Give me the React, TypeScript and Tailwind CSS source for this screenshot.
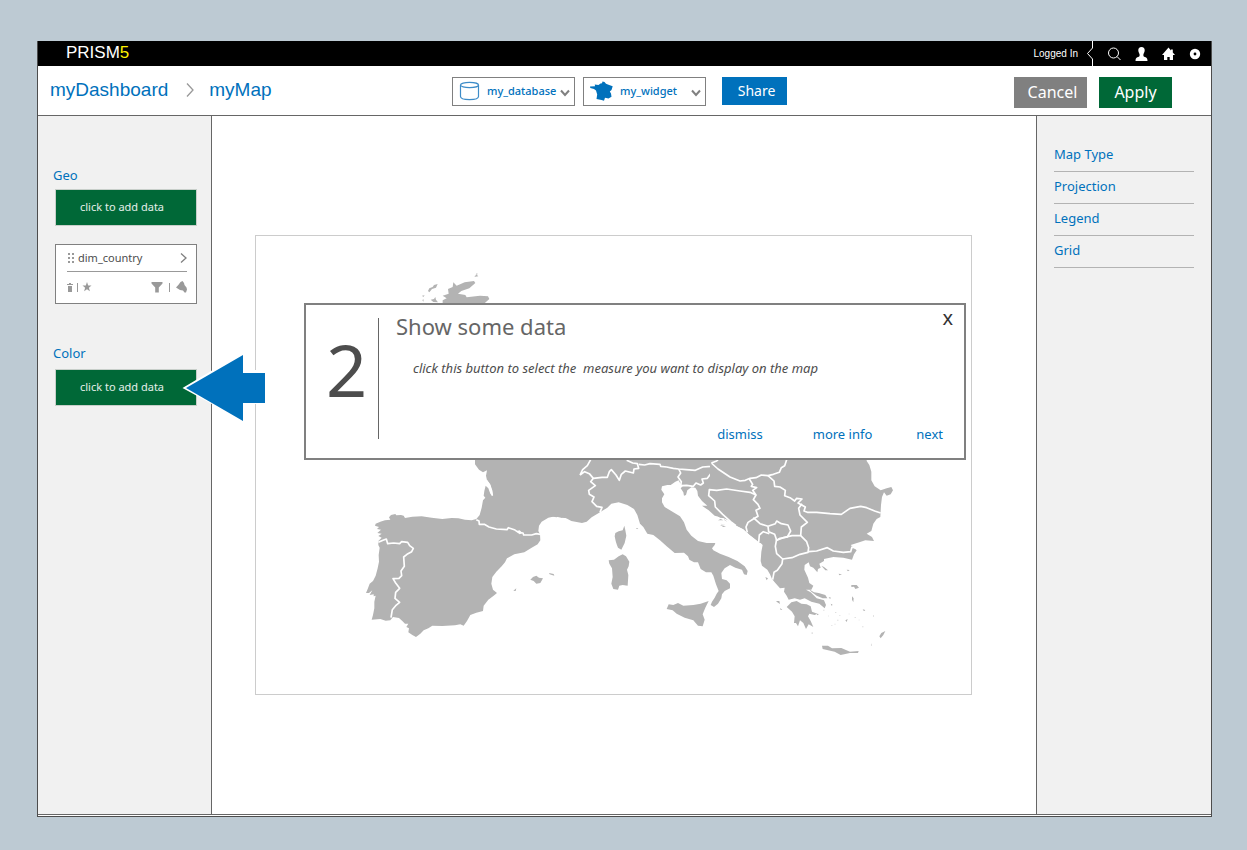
import React from "react";

const humanist = "font-['Noto_Sans','Open_Sans',sans-serif]";

function EuropeMap() {
  return (
    <svg
      viewBox="256 236 715 458"
      role="img"
      aria-label="Map of southern Europe"
      className="block h-auto w-full"
      fill="#b3b3b3"
    >
      <g transform="translate(300 265) scale(0.33333)">
        <path d="M428 130L428 106L440 100L428 92L446 86L444 72L458 66L460 52L470 62L494 52L522 48L526 54L508 70L484 78L474 86L496 90L500 97L540 92L564 94L568 102L552 116L550 130Z" />
        <path d="M384 78L388 70L398 66L402 60L413 57L408 68L396 72L388 82Z M392 104L402 102L406 96L408 104L414 112L400 111Z M366 92L374 91L370 96Z M367 106L370 102L371 110Z M523 34L530 29L535 34L526 35Z M527 29L531 24L533 28Z" />
      </g>
      <g transform="translate(355 455) scale(0.33333)">
        <path d="M360 10L360 28L372 44L384 52L396 46L393 62L396 76L405 88L411 108L413 124L406 116L400 100L392 92L388 108L386 122L391 128L384 136L380 158L374 180L364 192L350 196L330 194L310 190L290 189L262 192L230 188L200 184L172 185L150 189L146 182L138 180L124 181L121 177L108 180L102 187L106 194L90 196L76 200L62 206L60 212L72 216L66 222L78 224L67 234L80 236L70 243L80 248L70 258L70 270L74 278L71 300L72 320L68 340L62 362L54 378L44 386L38 402L33 414L42 414L52 406L44 420L56 418L56 424L62 422L58 440L58 460L54 480L50 494L76 492L92 497L106 496L114 486L132 489L142 498L150 506L160 506L154 516L162 520L160 532L172 540L183 546L196 536L206 526L220 520L232 512L262 513L300 511L316 508L326 512L336 498L346 480L364 473L384 468L386 452L400 434L416 422L426 414L414 404L409 386L412 366L424 350L440 334L450 322L456 310L478 298L508 292L530 278L548 268L556 256L555 238L550 228L552 212L560 200L580 188L600 184L618 188L640 190L640 10Z" />
        <path d="M526 374L534 366L544 362L552 368L564 370L556 384L544 386L536 378Z M582 354L596 357L598 362L584 358Z M475 407L484 400L482 408Z" />
        <g fill="none" stroke="#fff" strokeWidth="5" strokeLinejoin="round">
          <path d="M364 194L372 198L373 208L388 208L402 216L424 222L456 224L460 218L478 224L490 232L504 234L506 240L530 240L544 236L556 238" />
          <path d="M70 262L84 256L94 252L98 266L116 264L134 266L140 260L158 262L164 272L175 280L170 290L156 298L146 306L148 334L138 348L140 362L132 370L114 371L122 384L134 400L122 412L120 430L134 442L122 452L112 464L108 488" />
          <path d="M394 76L404 90L410 108L412 122" />
        </g>
        <path d="M484 228L494 226L502 234L494 238Z" fill="#fff" />
      </g>
      <g transform="translate(550 455) scale(0.33333)">
        <path d="M-30 10L-30 188L0 184L20 187L32 182L34 188L44 182L46 188L64 198L96 204L110 200L125 187L150 172L172 158L184 146L206 142L232 150L252 162L262 180L270 206L280 216L292 236L310 240L330 256L350 274L374 294L402 293L414 304L418 314L432 322L444 322L452 342L468 352L484 352L490 362L498 388L506 408L500 416L494 428L486 440L482 450L492 456L504 446L514 430L516 418L524 408L540 400L540 386L530 376L516 372L514 354L524 340L540 330L556 338L576 344L582 358L590 360L593 348L584 334L562 318L536 306L510 296L490 286L486 280L494 270L496 264L470 264L444 258L424 242L410 224L402 202L390 184L370 172L344 156L336 142L336 130L343 118L334 104L336 94L352 90L362 90L376 80L386 76L392 88L398 94L392 100L400 112L402 122L408 120L412 106L424 97L436 98L442 108L444 122L456 138L472 152L456 152L476 166L494 182L518 188L540 198L556 210L580 222L600 240L630 264L640 264L640 10Z" />
        <path d="M223 212L226 226L229 242L224 264L214 284L204 278L200 268L197 258L194 244L196 234L206 229L218 226Z" />
        <path d="M176 316L192 314L206 304L218 298L228 304L238 320L236 334L231 344L235 360L233 392L218 390L208 392L204 404L190 402L184 386L188 366L186 340L178 326Z" />
        <path d="M350 462L356 448L370 450L384 444L400 452L430 450L452 446L476 438L466 458L458 478L464 494L458 514L444 512L430 496L404 488L380 476L368 466Z" />
        <path d="M258 219L265 220L261 223Z M504 196L512 192L520 196M510 210L528 214L520 216Z" />
        <g fill="none" stroke="#fff" strokeWidth="5" strokeLinejoin="round">
          <path d="M90 60L98 44L112 32L122 14M90 60L104 50L118 56L130 70L122 80L136 92L116 106L118 118L132 126L126 140L140 154L156 157L150 172" />
          <path d="M130 70L156 67L172 67L178 50L184 44L198 60L208 76L214 58L226 48L250 54L252 42L266 40L262 26L248 24L230 16" />
          <path d="M266 28L284 30L300 26L330 28L332 34L350 36L370 40L386 42L408 44L436 46L458 36L484 34L500 16" />
          <path d="M386 42L392 54L384 66L394 80L392 92L410 91L430 94L438 84L452 90L460 84L456 72L472 70L484 54L502 44" />
          <path d="M412 108L422 118L432 132M420 106L440 128" strokeWidth="2" />
        </g>
      </g>
      <g transform="translate(700 455) scale(0.33333)">
        <path d="M30 10L30 166L60 188L80 190L106 210L130 222L150 240L178 260L188 270L184 290L182 318L186 332L202 344L210 358L216 372L226 384L240 400L254 398L252 410L260 422L266 434L284 430L300 434L314 430L334 440L358 446L374 460L378 450L372 436L350 430L332 412L318 404L334 404L340 392L328 384L324 368L313 344L314 330L326 322L330 334L340 338L352 352L354 342L362 338L358 326L372 318L372 312L400 306L430 308L456 314L462 298L470 286L452 270L478 262L496 256L522 258L516 246L500 236L514 228L520 206L530 192L541 186L543 150L546 126L552 112L560 122L572 118L579 106L574 96L560 100L542 106L524 94L514 76L514 50L508 30L500 18L500 10Z" />
        <path d="M260 456L274 442L290 438L304 446L320 448L332 454L336 470L352 476L344 480L328 476L324 484L332 498L340 516L326 508L318 522L310 504L300 496L294 514L288 504L282 504L284 484L276 470Z" />
        <path d="M326 402L342 412L356 414L376 420L382 430L368 430L350 422L334 410Z M366 572L384 572L396 580L424 579L450 590L476 588L474 594L450 594L422 600L404 590L368 582Z M538 544L544 534L556 528L550 540L542 550Z" />
        <path d="M454 390L470 390L477 398L466 402L462 395L454 396Z M456 424L461 430L460 442L456 434Z M416 356L426 358L418 361Z M440 344L449 345L444 349Z M488 463L496 465L492 469Z M436 496L443 492L440 501Z M228 438L238 438L240 447L232 442Z M240 459L247 464L242 465Z M196 366L204 370L200 376Z M350 476L357 477L352 481Z M364 332L372 336L384 346L376 346Z M392 446L397 448L396 454Z M386 426L393 428L390 432Z" />
        <path d="M370 464h3v3h-3z M384 482h3v2h-3z M405 472h4v2h-4z M412 494h3v3h-3z M394 510h3v2h-3z M446 476h3v2h-3z M464 486h3v3h-3z M476 494h3v2h-3z M487 514h3v3h-3z M513 566h2v7h-2z M335 532h3v5h-3z M520 480h2v6h-2z M404 506h2v3h-2z M418 480h3v2h-3z" opacity=".55" />
        <path d="M62 206L76 210L64 208Z M72 192L82 200L74 196Z" />
        <g fill="none" stroke="#fff" strokeWidth="5" strokeLinejoin="round">
          <path d="M34 24L54 42L90 66L120 78L136 76L150 70L168 68L184 60L204 62L220 58L238 52L244 38L254 32L260 14M34 24L50 18L54 14" />
          <path d="M148 72L158 88L154 94L170 98L158 106L168 120L150 112L120 108L80 102L50 106L28 104L26 122L44 138L46 156L68 178L92 200L108 212" />
          <path d="M168 120L160 134L174 148L180 160L168 166L174 184L160 192L144 202L138 216L142 232" />
          <path d="M204 62L222 78L224 94L240 96L256 106L254 122L270 128L284 138L290 130L306 132L294 144L316 156L312 168L322 172L350 172L390 176L424 178L450 160L482 154L500 158L524 168L542 174" />
          <path d="M306 146L296 160L300 180L322 202L304 216L302 242" />
          <path d="M160 188L180 206L204 214L226 206L230 198L244 206L264 210L272 228L262 246L240 250L230 256L224 238L206 230L204 214" />
          <path d="M176 262L178 240L190 230L208 236M230 252L226 274L230 296L248 312L246 326L232 346L222 352L218 374" />
          <path d="M230 256L250 248L276 242L302 242L320 260L326 278L324 292L300 298L276 308L248 312M326 290L350 288L382 278L400 288L430 292L452 290L456 276L474 282" />
        </g>
      </g>
    </svg>
  );
}

function Chevron() {
  return (
    <svg viewBox="0 0 10 8" className="pointer-events-none absolute right-1 bottom-2 h-2 w-2.5" fill="none" stroke="#808080" strokeWidth="2">
      <path d="M1 1.5L5 6L9 1.5" />
    </svg>
  );
}

function Picker({ label, value, children, pad }: { label: string; value: string; children: React.ReactNode; pad: string }) {
  return (
    <label className="relative flex h-[29px] w-[123px] items-center border border-[#808080] bg-white">
      <span className="pointer-events-none absolute left-1.5 top-0.5">{children}</span>
      <select aria-label={label} className={`h-full w-full appearance-none bg-transparent text-[11px] font-medium text-[#0071bc] outline-none ${pad}`}>
        <option>{value}</option>
      </select>
      <Chevron />
    </label>
  );
}

function AddData() {
  return (
    <button className="block h-[37px] w-full border border-[#c8cfca] bg-[#006837] pr-2 pb-px text-center text-[11px] text-[#e4efe9]">
      click to add data
    </button>
  );
}

function TopBar() {
  return (
    <header className="flex h-[25px] items-center bg-black pl-7 pr-2.5 text-white">
      <div className="grow pb-0.5 font-['Liberation_Sans',sans-serif] text-[17px] leading-5">
        PRISM<span className="text-[#fff200]">5</span>
      </div>
      <span className="font-['Liberation_Sans',sans-serif] text-[10px]">Logged In</span>
      <svg viewBox="0 0 8 25" className="ml-2 h-[25px] w-2" fill="none" stroke="#fff">
        <path d="M6.5 0V7L1.5 12.500L6.500 18V25" />
      </svg>
      <nav className="ml-[13px] flex items-center gap-3.5">
        <button aria-label="Search">
          <svg viewBox="0 0 14 14" className="size-3.5" fill="none" stroke="#fff">
            <circle cx="6.500" cy="6" r="5" />
            <path d="M10 9.500L13.500 13" />
          </svg>
        </button>
        <button aria-label="Account">
          <svg viewBox="0 0 13 14" className="h-3.5 w-[13px]" fill="#fff">
            <path d="M6.500 0C4.300 0 3.200 1.500 3.300 3.500C3.400 5.500 4.500 6.300 4.600 7.500C4.700 9 4.500 9.600 3 10.100C1.300 10.700 .5 11.300 .5 14H12.500C12.500 11.300 11.700 10.700 10 10.100C8.500 9.600 8.300 9 8.400 7.500C8.500 6.300 9.600 5.500 9.700 3.500C9.800 1.500 8.700 0 6.500 0Z" />
          </svg>
        </button>
        <a href="#home" aria-label="Home">
          <svg viewBox="0 0 13 13" className="size-[13px]" fill="#fff">
            <path d="M6.500 .5L0 8H2V13H5.300V10H7.700V13H11V8H13L10.800 5.500V2.500H9V3.500Z" />
          </svg>
        </a>
        <button aria-label="Settings">
          <svg viewBox="0 0 12 12" className="size-3" fill="#fff">
            <circle cx="6" cy="6" r="5.200" />
            <circle cx="6" cy="6" r="1.400" fill="#000" />
          </svg>
        </button>
      </nav>
    </header>
  );
}

function Toolbar() {
  return (
    <div className="flex h-[49px] items-start bg-white pl-3 pr-[39px]">
      <nav className="flex w-[402px] items-center pt-3 font-['Liberation_Sans',sans-serif] text-[19px] leading-6 text-[#0071bc]">
        <a href="#dashboard">myDashboard</a>
        <svg viewBox="0 0 8 14" className="ml-[18px] mr-[15px] h-3.5 w-2" fill="none" stroke="#999" strokeWidth="1.300">
          <path d="M1 .5L7 7L1 13.500" />
        </svg>
        <a href="#map">myMap</a>
      </nav>
      <div className="flex grow gap-2 pt-[11px]">
        <Picker label="Database" value="my_database" pad="pl-[34px]">
          <svg viewBox="0 0 21 22" className="h-[22px] w-[21px]" fill="none" stroke="#3d8cc8" strokeWidth="1.200">
            <ellipse cx="10.500" cy="5" rx="9" ry="2.600" />
            <path d="M1.500 5V16.500C1.500 18.500 5.500 19.600 10.500 19.600S19.500 18.500 19.500 16.500V5" />
          </svg>
        </Picker>
        <Picker label="Widget" value="my_widget" pad="pl-9">
          <svg viewBox="0 0 24 22" className="h-[22px] w-6" fill="#0071bc">
            <path d="M0 6.500L5 6.300L4.800 4.500L6.500 4.800L8.500 5L10.500 3.500L12 3.200L12.500 1.500L14.500 2L16 3.800L18.500 4.800L22.700 6.300L21.500 10L19.800 11.500L21 13.500L21.500 16.800L18.500 18.500L15 17.800L14 20.800L11.500 20L6.500 19L7.200 14.500L6 10.500L4 9L.3 8Z" />
          </svg>
        </Picker>
        <button className="ml-2 h-7 w-[65px] bg-[#0071bc] pb-0.5 pl-1 text-[14px] text-white">Share</button>
      </div>
      <div className="flex gap-3 pt-[11px] text-[16px] text-white">
        <button className="h-[31px] w-[73px] bg-[#808080] pb-0.5 pl-1">Cancel</button>
        <button className="h-[31px] w-[73px] bg-[#006837] pb-0.5">Apply</button>
      </div>
    </div>
  );
}

function FieldCard() {
  return (
    <div className="mt-[18px] h-[60px] border border-[#808080] bg-white pl-[11px] pr-[9px]">
      <div className="flex h-[27px] items-center border-b border-[#999] text-[11px] text-[#4d4d4d]">
        <svg viewBox="0 0 6 10" className="ml-px mr-1 h-2.5 w-1.5" fill="#999">
          <path d="M0 0h2v2H0zM4 0h2v2H4zM0 4h2v2H0zM4 4h2v2H4zM0 8h2v2H0zM4 8h2v2H4z" />
        </svg>
        <span className="grow">dim_country</span>
        <button aria-label="Open dim_country">
          <svg viewBox="0 0 7 10" className="h-2.5 w-[7px]" fill="none" stroke="#808080" strokeWidth="1.300">
            <path d="M1 .5L6 5L1 9.500" />
          </svg>
        </button>
      </div>
      <div className="flex h-[30px] items-center">
        <button aria-label="Delete">
          <svg viewBox="0 0 6 9" className="h-[9px] w-1.5" fill="#999">
            <path d="M0 1h2V0h2v1h2v1H0zM1 3h4v6H1z" />
          </svg>
        </button>
        <span className="mx-1 h-[9px] w-px bg-[#999]" />
        <button aria-label="Favorite" className="mr-auto">
          <svg viewBox="0 0 10 10" className="size-2.5" fill="#999">
            <path d="M5 0L6.200 3.600H9.500L6.900 5.700L7.900 9.300L5 7.200L2.100 9.300L3.100 5.700L.5 3.600H3.800Z" />
          </svg>
        </button>
        <button aria-label="Filter">
          <svg viewBox="0 0 12 11" className="h-[11px] w-3" fill="#999">
            <path d="M.5 0H11.500V1.500L7.800 5.500V10.500H4.200V5.500L.5 1.500Z" />
          </svg>
        </button>
        <span className="mx-1.5 h-[9px] w-px bg-[#999]" />
        <button aria-label="Format">
          <svg viewBox="0 0 11 12" className="h-3 w-[11px]" fill="#999">
            <path d="M6.500 0L8 2L8.500 4L10.500 6.500L11 8.500L10 11.500H8.500L7 9.500L4 9L0 6.500L2.500 3.800L4.500 1Z" />
          </svg>
        </button>
      </div>
    </div>
  );
}

function LeftPanel() {
  return (
    <aside className="relative w-[174px] shrink-0 border-r border-[#666] bg-[#f1f1f1] pl-[17px] pr-3.5 pt-[49px]">
      <h2 className="-ml-0.5 mb-1 text-[13px] leading-5 text-[#0071bc]">Geo</h2>
      <AddData />
      <FieldCard />
      <h2 className="-ml-0.5 mb-1.5 mt-[39px] text-[13px] leading-5 text-[#0071bc]">Color</h2>
      <AddData />
      <svg viewBox="0 0 86 74" className="absolute left-[143px] top-[234px] z-10 h-[74px] w-[86px]">
        <path d="M1.500 38L63 1.500V20H84.500V54H63V71.500Z" fill="#fff" />
        <path d="M5 38L62 5V23H84V53H62V71Z" fill="#0071bc" />
      </svg>
    </aside>
  );
}

function TourDialog() {
  return (
    <section role="dialog" aria-labelledby="tour-title" className="absolute left-[92px] right-[70px] top-[187px] flex h-[157px] border-2 border-[#808080] bg-white">
      <div className="mt-[13px] h-[121px] w-[73px] border-r border-[#666] pl-5 text-[72px] leading-[102px] text-[#4d4d4d]">2</div>
      <div className="flex grow flex-col pl-[17px] pr-[21px] pt-[5px]">
        <div className="flex items-start justify-between">
          <h1 id="tour-title" className="text-[22px] leading-8 text-[#666]">Show some data</h1>
          <button aria-label="Close" className="-mr-3.5 px-1 text-[20px] leading-4 text-[#333]">x</button>
        </div>
        <p className="ml-[17px] mt-4 whitespace-pre text-[13px] italic leading-5 text-[#4d4d4d]">click this button to select the  measure you want to display on the map</p>
        <div className="mb-3.5 mt-auto flex justify-end text-[13px] leading-5 text-[#0071bc]">
          <button>dismiss</button>
          <button className="ml-[50px]">more info</button>
          <button className="ml-11">next</button>
        </div>
      </div>
    </section>
  );
}

function RightPanel() {
  return (
    <aside className="w-[175px] shrink-0 border-l border-[#666] bg-[#f1f1f1] px-[17px] pt-6">
      <ul className="text-[13px] text-[#0071bc]">
        {["Map Type", "Projection", "Legend", "Grid"].map((item) => (
          <li key={item} className="border-b border-[#b3b3b3]">
            <button className="block h-[31px] w-full pb-0.5 text-left">{item}</button>
          </li>
        ))}
      </ul>
    </aside>
  );
}

export default function App() {
  return (
    <div className={`flex min-h-screen flex-col bg-[#bdcad3] pb-[33px] pl-[37px] pr-[35px] pt-[41px] ${humanist}`}>
      <div className="flex grow flex-col border border-t-0 border-[#4d4d4d] bg-white">
        <TopBar />
        <Toolbar />
        <div className="mb-px flex grow border-y border-[#666]">
          <LeftPanel />
          <main className="relative grow bg-white pb-[119px] pl-[43px] pr-16 pt-[119px]">
            <div className="border border-[#ccc]">
              <EuropeMap />
            </div>
            <TourDialog />
          </main>
          <RightPanel />
        </div>
      </div>
    </div>
  );
}
